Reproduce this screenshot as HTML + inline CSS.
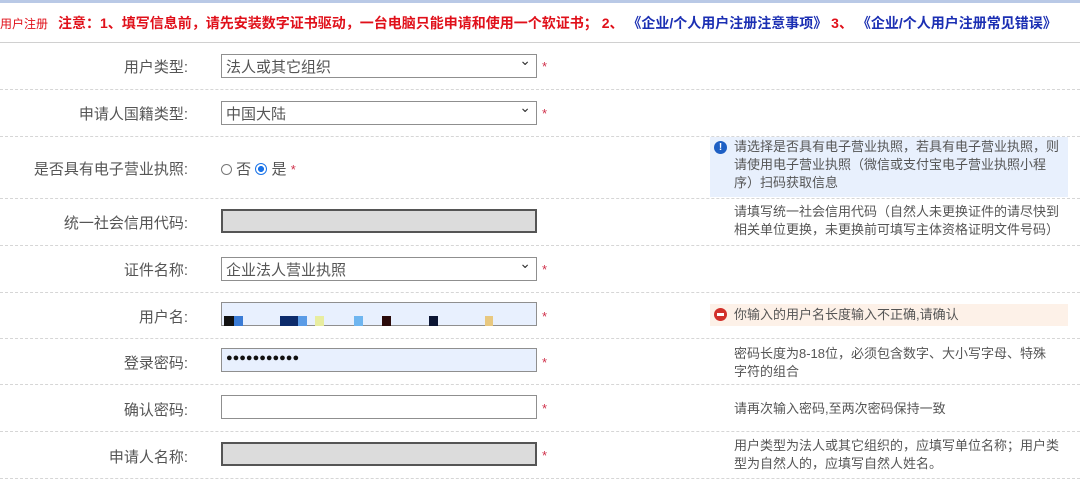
<!DOCTYPE html>
<html><head><meta charset="utf-8"><style>
*{margin:0;padding:0;box-sizing:border-box}
body{width:1080px;height:480px;overflow:hidden;background:#fff;font-family:"Liberation Sans","Noto Sans CJK SC",sans-serif;color:#555;position:relative}
.a{position:absolute;white-space:nowrap}
.top{left:0;top:0;width:1080px;height:3px;background:#b9c9e6}
.notice{left:0;top:13px;font-size:14px;font-weight:bold;color:#e0101a}
.notice .u{font-weight:normal;font-size:12px;color:#e0101a;margin-right:10px}
.notice .b{color:#1b2fb3}
.sep{left:0;width:1080px;height:0;border-top:1px dashed #d6d6d6}
.sep0{border-top:1px solid #d0d0d0}
.lbl{right:892px;font-size:15px;color:#555;text-align:right}
.inp{left:221px;width:316px;height:24px;border:1px solid #8f8f8f;background:#fff;font-size:15px;color:#555;padding:1px 0 0 4px}
.sel::after{content:"⌄";position:absolute;right:5px;top:-3px;font-size:14px;color:#333}
.gray{background:#dcdcdc;border:2px solid #555}
.blue{background:#e8f0fe}
.star{left:542px;font-size:13px;color:#d0304a}
.help{left:734px;font-size:13px;color:#555;line-height:18px}
</style></head><body>
<div class="a top"></div>
<div class="a notice"><span class="u">用户注册</span>注意：1、填写信息前，请先安装数字证书驱动，一台电脑只能申请和使用一个软证书； 2、 <span class="b">《企业/个人用户注册注意事项》</span> 3、 <span class="b">《企业/个人用户注册常见错误》</span></div>
<div class="a sep sep0" style="top:42px"></div>
<div class="a sep" style="top:89px"></div>
<div class="a sep" style="top:136px"></div>
<div class="a sep" style="top:198px"></div>
<div class="a sep" style="top:245px"></div>
<div class="a sep" style="top:292px"></div>
<div class="a sep" style="top:338px"></div>
<div class="a sep" style="top:384px"></div>
<div class="a sep" style="top:431px"></div>
<div class="a sep" style="top:478px"></div>

<div class="a lbl" style="top:56px">用户类型:</div>
<div class="a inp sel" style="top:54px">法人或其它组织</div><div class="a star" style="top:59px">*</div>

<div class="a lbl" style="top:103px">申请人国籍类型:</div>
<div class="a inp sel" style="top:101px">中国大陆</div><div class="a star" style="top:106px">*</div>

<div class="a lbl" style="top:158px">是否具有电子营业执照:</div>
<div class="a" style="left:221px;top:158px;font-size:15px;color:#555">
<span style="display:inline-block;width:11px;height:11px;border:1px solid #777;border-radius:50%;vertical-align:-1px"></span> 否
<span style="display:inline-block;width:12px;height:12px;border:1px solid #1a73e8;border-radius:50%;vertical-align:-1px;background:radial-gradient(#1a73e8 40%,#fff 45%)"></span> 是 <span style="color:#d0304a;font-size:13px">*</span></div>
<div class="a" style="left:710px;top:137px;width:358px;height:60px;background:#e8f0fd"></div>
<div class="a" style="left:714px;top:141px;width:13px;height:13px;border-radius:50%;background:#1d5fc4;color:#fff;font-size:10px;font-weight:bold;text-align:center;line-height:13px">!</div>
<div class="a help" style="top:138px">请选择是否具有电子营业执照，若具有电子营业执照，则<br>请使用电子营业执照（微信或支付宝电子营业执照小程<br>序）扫码获取信息</div>

<div class="a lbl" style="top:212px">统一社会信用代码:</div>
<div class="a inp gray" style="top:209px"></div>
<div class="a help" style="top:203px">请填写统一社会信用代码（自然人未更换证件的请尽快到<br>相关单位更换，未更换前可填写主体资格证明文件号码）</div>

<div class="a lbl" style="top:259px">证件名称:</div>
<div class="a inp sel" style="top:257px">企业法人营业执照</div><div class="a star" style="top:262px">*</div>

<div class="a lbl" style="top:306px">用户名:</div>
<div class="a inp blue" style="top:302px"></div>
<div class="a" style="left:224px;top:316px;width:10px;height:10px;background:#111"></div>
<div class="a" style="left:234px;top:316px;width:9px;height:10px;background:#3a7bd5"></div>
<div class="a" style="left:280px;top:316px;width:18px;height:10px;background:#0d2b6b"></div>
<div class="a" style="left:298px;top:316px;width:9px;height:10px;background:#5a9be6"></div>
<div class="a" style="left:315px;top:316px;width:9px;height:10px;background:#e8eda0"></div>
<div class="a" style="left:354px;top:316px;width:9px;height:10px;background:#6fb6f0"></div>
<div class="a" style="left:382px;top:316px;width:9px;height:10px;background:#2a0a0a"></div>
<div class="a" style="left:429px;top:316px;width:9px;height:10px;background:#0b1533"></div>
<div class="a" style="left:485px;top:316px;width:8px;height:10px;background:#e8c880"></div>
<div class="a star" style="top:309px">*</div>
<div class="a" style="left:710px;top:304px;width:358px;height:22px;background:#fdf1e8"></div>
<div class="a" style="left:714px;top:308px;width:13px;height:13px;border-radius:50%;background:#d2302a"><div style="position:absolute;left:3px;top:5px;width:7px;height:3px;background:#fff"></div></div>
<div class="a help" style="top:306px">你输入的用户名长度输入不正确,请确认</div>

<div class="a lbl" style="top:352px">登录密码:</div>
<div class="a inp blue" style="top:348px;font-size:11px;padding-top:3px;color:#111">●●●●●●●●●●●</div>
<div class="a star" style="top:355px">*</div>
<div class="a help" style="top:345px">密码长度为8-18位，必须包含数字、大小写字母、特殊<br>字符的组合</div>

<div class="a lbl" style="top:399px">确认密码:</div>
<div class="a inp" style="top:395px"></div><div class="a star" style="top:401px">*</div>
<div class="a help" style="top:400px">请再次输入密码,至两次密码保持一致</div>

<div class="a lbl" style="top:446px">申请人名称:</div>
<div class="a inp gray" style="top:442px"></div><div class="a star" style="top:448px">*</div>
<div class="a help" style="top:437px">用户类型为法人或其它组织的，应填写单位名称；用户类<br>型为自然人的，应填写自然人姓名。</div>
</body></html>
